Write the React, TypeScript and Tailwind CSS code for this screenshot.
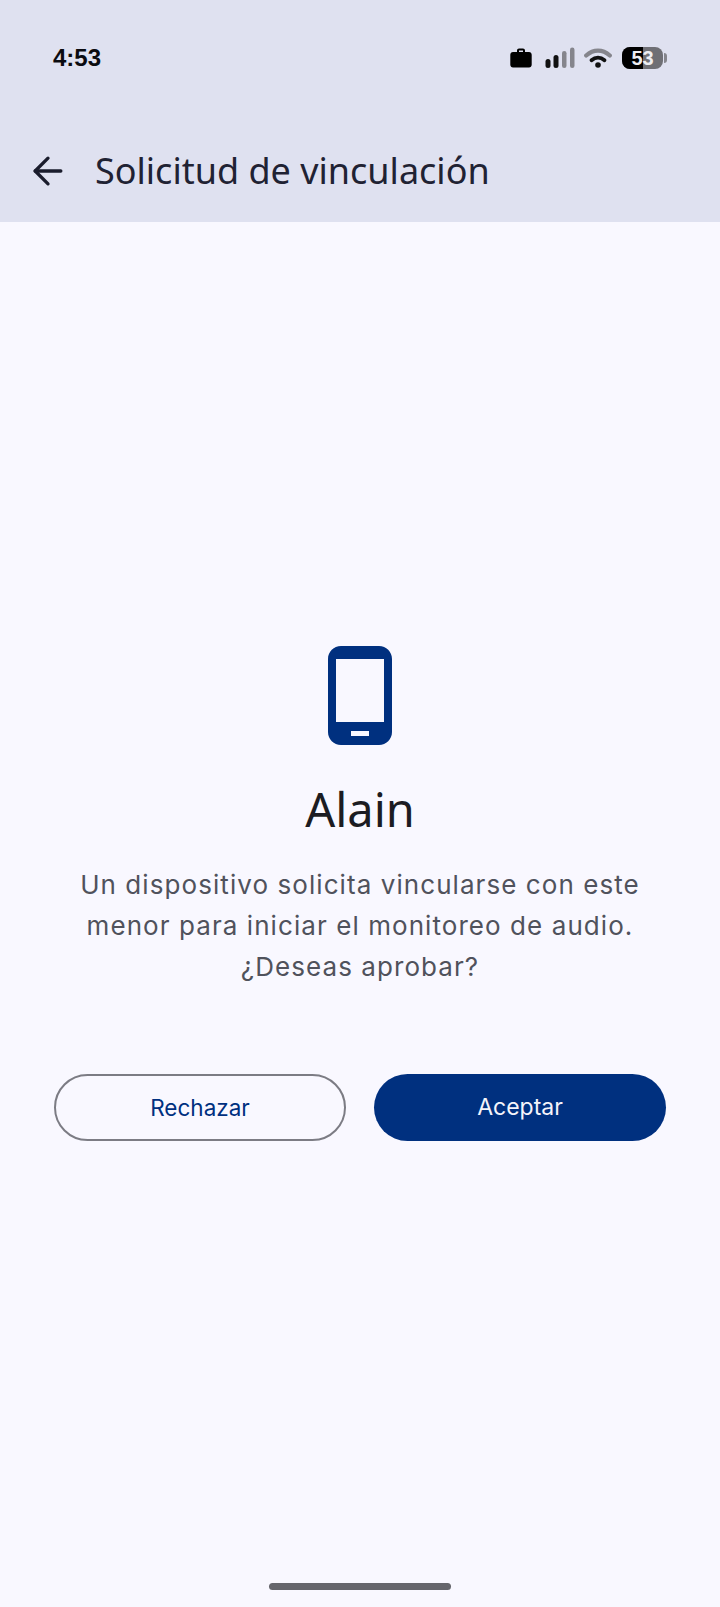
import { ArrowLeft } from 'lucide-react';

function StatusIcons() {
  return (
    <div className="flex items-center">
      <svg width="22" height="20" viewBox="0 0 22 20" className="mr-[13px]">
        <path
          d="M7 4V2.500C7 1.400 7.900.500 9 .500h4c1.100 0 2 .900 2 2V4h4c1.600 0 2.700 1.200 2.700 2.700v10c0 1.600-1.100 2.800-2.700 2.800H3C1.400 19.500.300 18.300.300 16.700v-10C.300 5.200 1.400 4 3 4h4zm2-1.500V4h4V2.500H9z"
          fill="#000"
          fillRule="evenodd"
        />
      </svg>
      <svg width="30" height="22" viewBox="0 0 30 22" className="mr-[9px]">
        <rect x="0.500" y="12" width="5" height="9" rx="2.500" fill="#111" />
        <rect x="8.500" y="8" width="5" height="13" rx="2.500" fill="#111" />
        <rect x="17" y="4" width="4.500" height="17" rx="2.250" fill="#85858c" />
        <rect x="25" y="0.500" width="4.500" height="20.500" rx="2.250" fill="#85858c" />
      </svg>
      <svg width="28" height="20" viewBox="0 0 28 20" className="mr-[10px]">
        <path d="M2.200 7.500C9.500.900 18.500.900 25.800 7.500" fill="none" stroke="#85858c" strokeWidth="4.200" strokeLinecap="round" />
        <path d="M7.500 12.300C11.500 8.800 16.500 8.800 20.500 12.300" fill="none" stroke="#111" strokeWidth="3.800" strokeLinecap="round" />
        <circle cx="14" cy="17" r="2.800" fill="#111" />
      </svg>
      <div className="flex items-center">
        <div className="relative h-[22px] w-[41px] overflow-hidden rounded-[8px] bg-[#6f6f75]">
          <div className="absolute inset-y-0 left-0 w-[21px] bg-black" />
          <span className="absolute inset-0 flex items-center justify-center text-[20px] font-bold leading-none text-[#eeeef2] font-['Liberation_Sans',sans-serif]">
            53
          </span>
        </div>
        <div className="ml-[1px] h-[10px] w-[3px] rounded-r-sm bg-[#85858c]" />
      </div>
    </div>
  );
}

function PhoneIcon() {
  return (
    <svg width="64" height="99" viewBox="0 0 64 99">
      <path
        fillRule="evenodd"
        fill="#00307f"
        d="M13 0h38c7.200 0 13 5.800 13 13v73c0 7.200-5.800 13-13 13H13C5.800 99 0 93.200 0 86V13C0 5.800 5.800 0 13 0zM8 13v63h48V13H8zm15 72v5h18v-5H23z"
      />
    </svg>
  );
}

export default function App() {
  return (
    <div className="relative flex h-[1607px] w-[720px] flex-col overflow-hidden bg-[#f9f8ff]">
      <header className="h-[222px] shrink-0 bg-[#dfe1f0]">
        <div className="flex items-center justify-between px-[53px] pt-[46px]">
          <span className="text-[24px] font-bold leading-[23px] text-[#0b0b10] font-['Liberation_Sans',sans-serif]">4:53</span>
          <StatusIcons />
        </div>
        <div className="mt-[78px] flex items-center pl-[26px]">
          <ArrowLeft className="h-11 w-11 text-[#1a1c2c]" strokeWidth={1.8} />
          <h1 className="ml-[25px] text-[36px] font-normal leading-[48px] text-[#1f2233] font-['Noto_Sans',sans-serif]">
            Solicitud de vinculación
          </h1>
        </div>
      </header>

      <main className="flex flex-1 flex-col items-center pt-[424px]">
        <PhoneIcon />
        <div className="mt-[36px] text-[47px] leading-[56px] text-[#1c1c22] font-['Noto_Sans',sans-serif]">Alain</div>
        <p className="mt-[27px] text-center text-[26px] leading-[41px] tracking-[1.07px] text-[#50525c] font-['Inter',sans-serif]">
          Un dispositivo solicita vincularse con este
          <br />
          menor para iniciar el monitoreo de audio.
          <br />
          ¿Deseas aprobar?
        </p>
        <div className="mt-[87px] grid w-full grid-cols-2 gap-[28px] px-[54px]">
          <button className="h-[67px] rounded-full border-2 border-[#7c7c84] text-[22.500px] text-[#00307f] font-['Inter',sans-serif]">
            Rechazar
          </button>
          <button className="h-[67px] rounded-full bg-[#00307f] text-[23px] text-[#f4f4fb] font-['Inter',sans-serif]">
            Aceptar
          </button>
        </div>
      </main>

      <div className="absolute bottom-[17px] left-[269px] h-[7px] w-[182px] rounded-full bg-[#66666c]" />
    </div>
  );
}
